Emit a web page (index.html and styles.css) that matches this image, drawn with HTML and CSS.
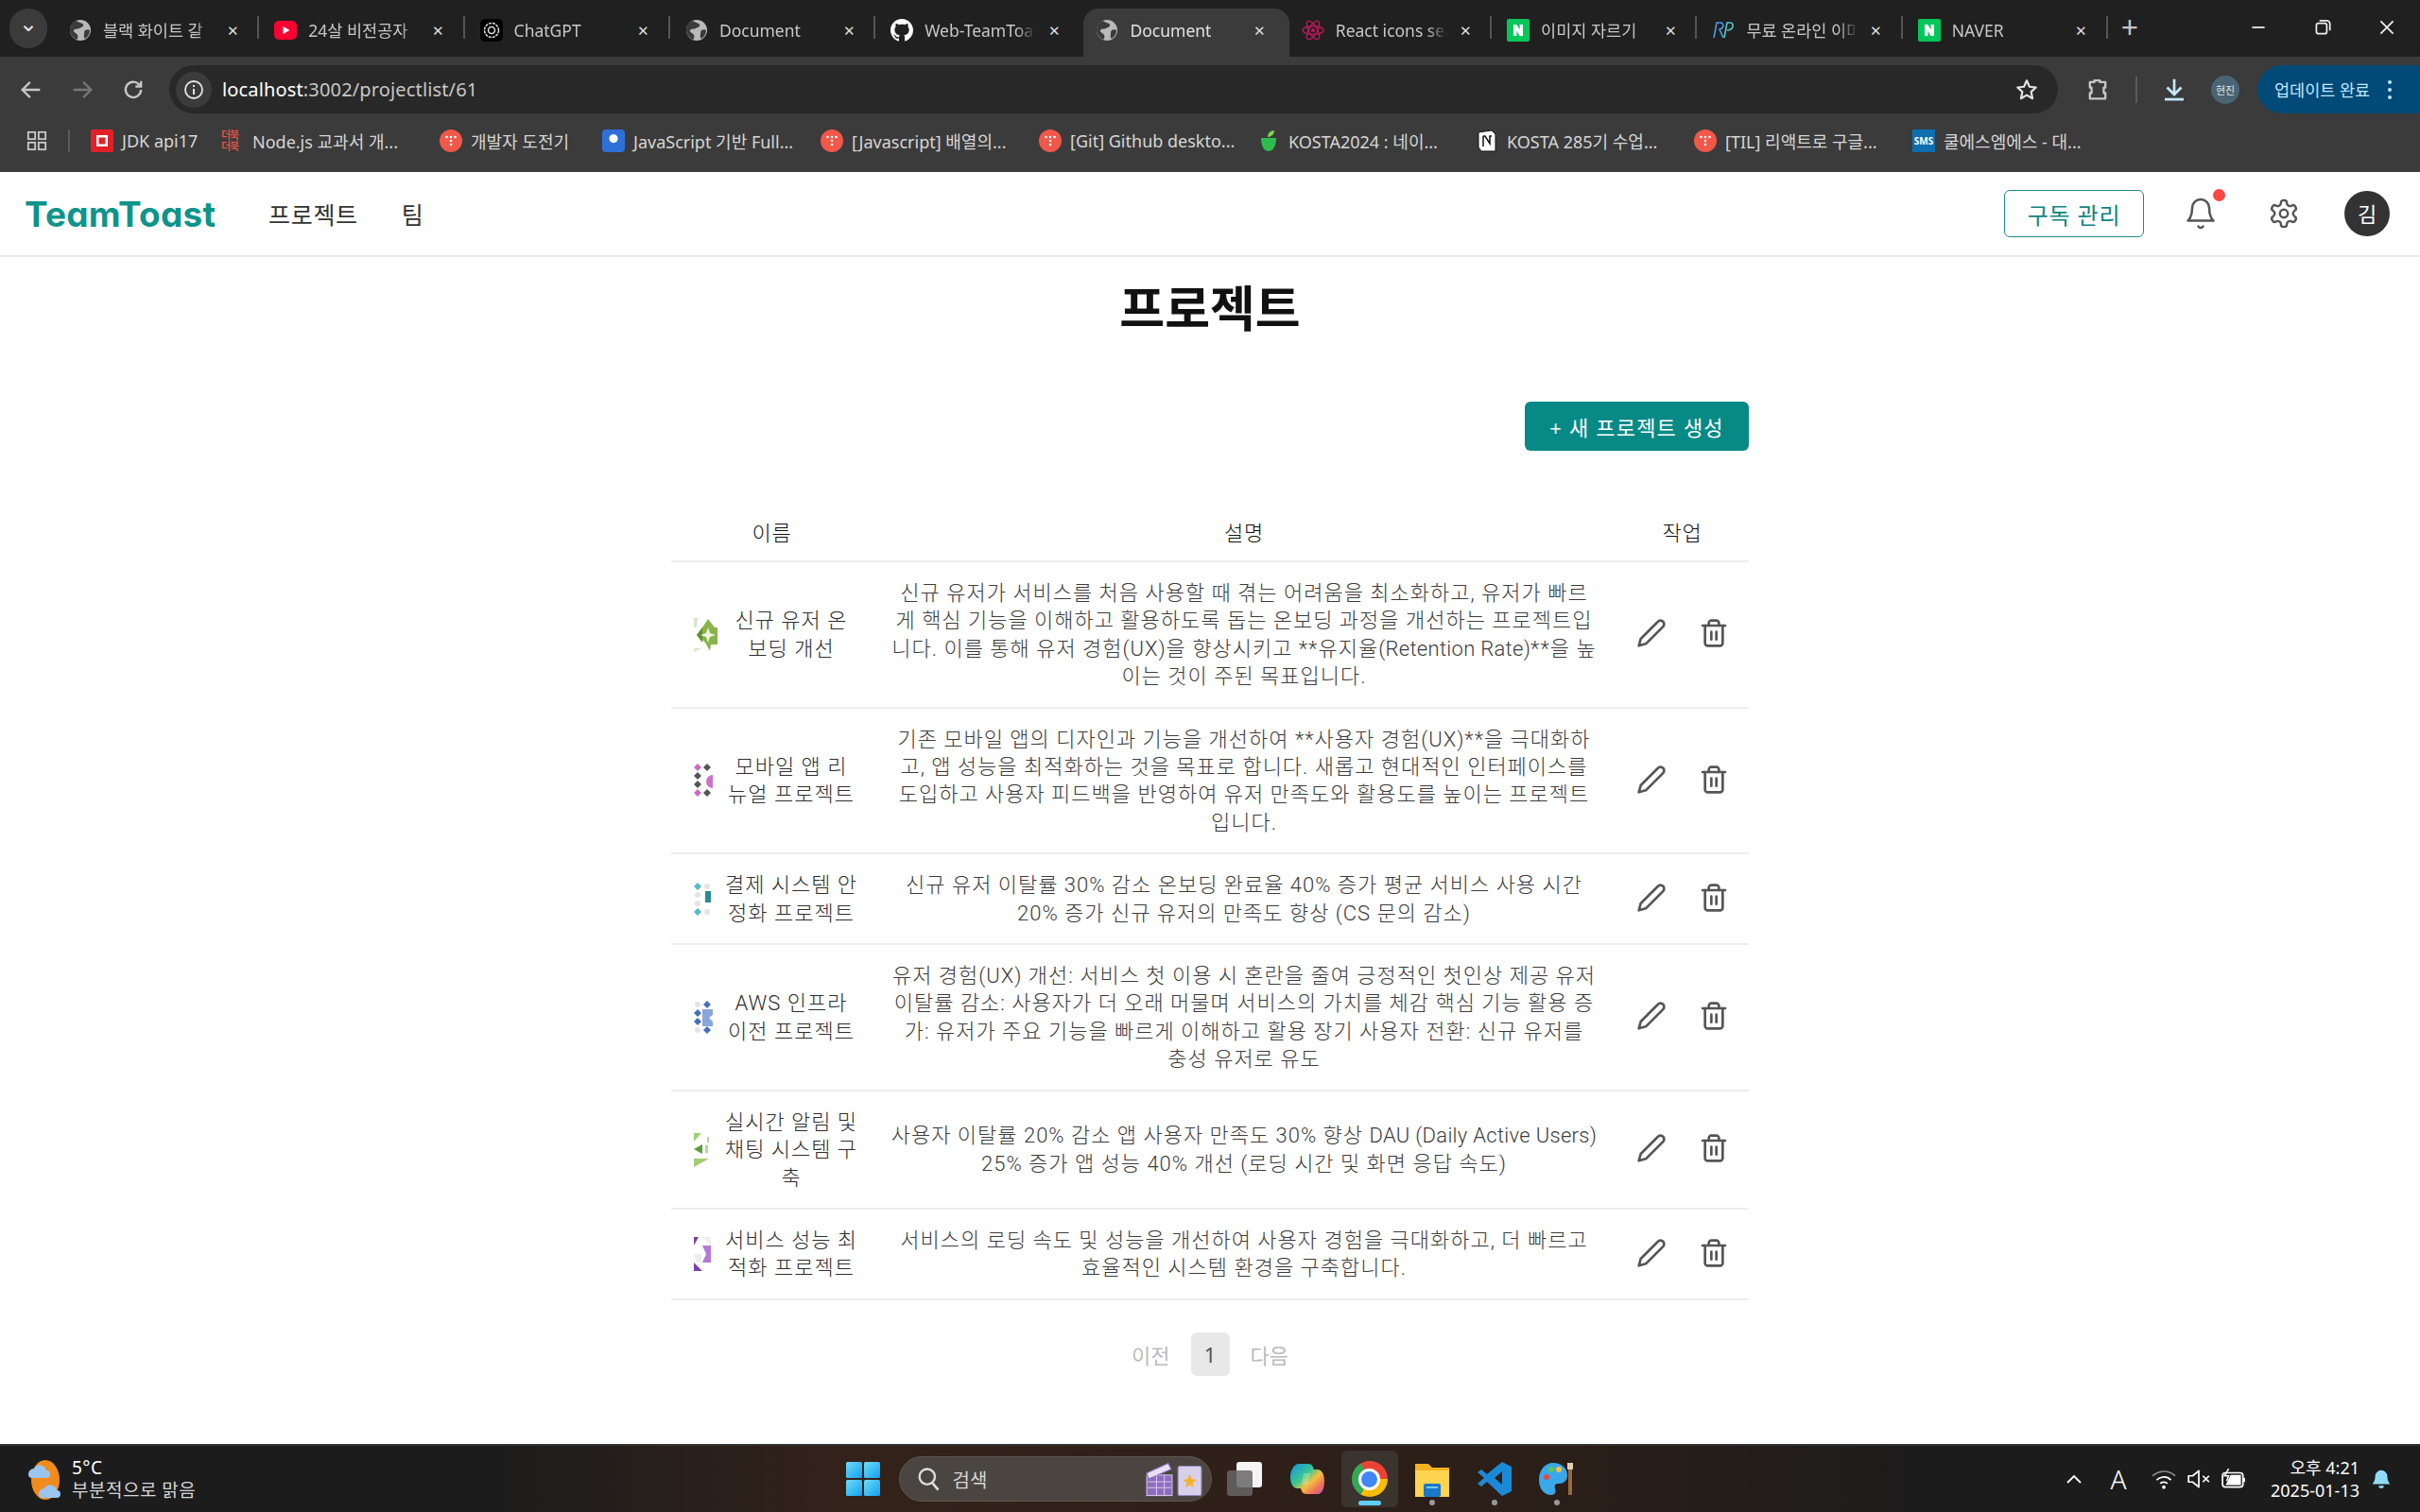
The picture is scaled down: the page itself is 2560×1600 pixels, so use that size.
FILE: index.html
```html
<!DOCTYPE html>
<html lang="ko">
  <head>
    <meta charset="UTF-8" />
    <title>Document</title>
    <link rel="stylesheet" href="styles.css">
  </head>
  <body>
    <svg class="sprites" xmlns="http://www.w3.org/2000/svg">
      <symbol id="globe" viewBox="0 0 24 24">
        <circle cx="12" cy="12" r="11" fill="#b9b9b9"/>
        <path d="M8 2c2 2 6 2 7 4s-2 3-4 4-5 0-6 2 3 3 4 5 0 4-1 5C4 20 1 16 1 12 1 7 4 3 8 2zM17 12c2-1 4-1 5 0 0 4-2 7-5 9-2-2-1-4-1-5s0-3 1-4z" fill="#3b3b3b"/>
      </symbol>
      <symbol id="youtube" viewBox="0 0 24 24">
        <rect x="0" y="2" width="24" height="20" rx="5" fill="#ff0033"/>
        <path d="M9.5 8l7 4-7 4z" fill="#fff"/>
      </symbol>
      <symbol id="chatgpt" viewBox="0 0 24 24">
        <rect width="24" height="24" rx="5" fill="#000"/>
        <circle cx="12" cy="12" r="7.5" fill="none" stroke="#ddd" stroke-width="1.5" stroke-dasharray="3 1"/>
        <circle cx="12" cy="12" r="3.5" fill="none" stroke="#ddd" stroke-width="1.5"/>
      </symbol>
      <symbol id="github" viewBox="0 0 16 16">
        <path fill="#fff" d="M8 0C3.58 0 0 3.58 0 8c0 3.54 2.29 6.53 5.47 7.59.4.07.55-.17.55-.38 0-.19-.01-.82-.01-1.49-2.01.37-2.53-.49-2.69-.94-.09-.23-.48-.94-.82-1.13-.28-.15-.68-.52-.01-.53.63-.01 1.08.58 1.23.82.72 1.21 1.87.87 2.33.66.07-.52.28-.87.51-1.07-1.78-.2-3.64-.89-3.64-3.95 0-.87.31-1.59.82-2.15-.08-.2-.36-1.02.08-2.12 0 0 .67-.21 2.2.82.64-.18 1.32-.27 2-.27.68 0 1.36.09 2 .27 1.53-1.04 2.2-.82 2.2-.82.44 1.1.16 1.92.08 2.12.51.56.82 1.27.82 2.15 0 3.07-1.87 3.75-3.65 3.95.29.25.54.73.54 1.48 0 1.07-.01 1.93-.01 2.2 0 .21.15.46.55.38A8.013 8.013 0 0016 8c0-4.42-3.58-8-8-8z"/>
      </symbol>
      <symbol id="react" viewBox="0 0 24 24">
        <g fill="none" stroke="#c2185b" stroke-width="1.3">
          <ellipse cx="12" cy="12" rx="11" ry="4.4"/>
          <ellipse cx="12" cy="12" rx="11" ry="4.4" transform="rotate(60 12 12)"/>
          <ellipse cx="12" cy="12" rx="11" ry="4.4" transform="rotate(120 12 12)"/>
        </g>
        <circle cx="12" cy="12" r="2" fill="#c2185b"/>
      </symbol>
      <symbol id="naver" viewBox="0 0 24 24">
        <rect width="24" height="24" rx="2" fill="#03c75a"/>
        <path d="M7 6h3.4l3.2 5.2V6H17v12h-3.4l-3.2-5.2V18H7z" fill="#fff"/>
      </symbol>
      <symbol id="rp" viewBox="0 0 24 24">
        <path d="M2 20L5 4h4c4 0 4 6-1 7l4 9" fill="none" stroke="#4b9be8" stroke-width="1.6"/>
        <path d="M13 20l3-16h3c5 0 4 8-3 8" fill="none" stroke="#5ac8c8" stroke-width="1.6"/>
      </symbol>
      <symbol id="tistory" viewBox="0 0 24 24">
        <circle cx="12" cy="12" r="12" fill="#f0584a"/>
        <g fill="#fff"><circle cx="7.5" cy="8" r="1.3"/><circle cx="12" cy="8" r="1.3"/><circle cx="16.5" cy="8" r="1.3"/><circle cx="12" cy="12" r="1.3"/><circle cx="12" cy="16" r="1.3"/></g>
      </symbol>
      <symbol id="pencil" viewBox="0 0 24 24">
        <path d="M17 3a2.85 2.83 0 1 1 4 4L7.5 20.5 2 22l1.5-5.5Z" fill="none" stroke="#555" stroke-width="2" stroke-linecap="round" stroke-linejoin="round"/>
      </symbol>
      <symbol id="trash" viewBox="0 0 24 24">
        <g fill="none" stroke="#555" stroke-width="2" stroke-linecap="round" stroke-linejoin="round">
          <path d="M3 6h18"/><path d="M19 6v14c0 1-1 2-2 2H7c-1 0-2-1-2-2V6"/><path d="M8 6V4c0-1 1-2 2-2h4c1 0 2 1 2 2v2"/>
          <path d="M10 11v6"/><path d="M14 11v6"/>
        </g>
      </symbol>
    </svg>

    <!-- 브라우저 탭 -->
    <div class="tabstrip">
      <div class="tab-search">⌄</div>
      <div class="tab"><svg class="favicon"><use href="#globe"/></svg><span class="tab-title">블랙 화이트 갈</span><span class="tab-close">✕</span></div>
      <div class="tab"><svg class="favicon"><use href="#youtube"/></svg><span class="tab-title">24살 비전공자</span><span class="tab-close">✕</span></div>
      <div class="tab"><svg class="favicon"><use href="#chatgpt"/></svg><span class="tab-title">ChatGPT</span><span class="tab-close">✕</span></div>
      <div class="tab"><svg class="favicon"><use href="#globe"/></svg><span class="tab-title">Document</span><span class="tab-close">✕</span></div>
      <div class="tab no-sep"><svg class="favicon"><use href="#github"/></svg><span class="tab-title">Web-TeamToast</span><span class="tab-close">✕</span></div>
      <div class="tab active no-sep"><svg class="favicon"><use href="#globe"/></svg><span class="tab-title">Document</span><span class="tab-close">✕</span></div>
      <div class="tab"><svg class="favicon"><use href="#react"/></svg><span class="tab-title">React icons search</span><span class="tab-close">✕</span></div>
      <div class="tab"><svg class="favicon"><use href="#naver"/></svg><span class="tab-title">이미지 자르기</span><span class="tab-close">✕</span></div>
      <div class="tab"><svg class="favicon"><use href="#rp"/></svg><span class="tab-title">무료 온라인 이미지</span><span class="tab-close">✕</span></div>
      <div class="tab"><svg class="favicon"><use href="#naver"/></svg><span class="tab-title">NAVER</span><span class="tab-close">✕</span></div>
      <div class="tab-new">+</div>
      <div class="window-controls">
        <svg class="win-btn" viewBox="0 0 20 20"><path d="M4 10h12" stroke="#eee" stroke-width="1.6"/></svg>
        <svg class="win-btn" viewBox="0 0 20 20"><rect x="4" y="6" width="10" height="10" rx="2" fill="none" stroke="#eee" stroke-width="1.6"/><path d="M7 3.5h7a3 3 0 0 1 3 3V13" fill="none" stroke="#eee" stroke-width="1.6"/></svg>
        <svg class="win-btn" viewBox="0 0 20 20"><path d="M4 4l12 12M16 4L4 16" stroke="#eee" stroke-width="1.6"/></svg>
      </div>
    </div>

    <!-- 주소창 -->
    <div class="toolbar">
      <svg class="tool-icon" viewBox="0 0 24 24"><path d="M20 12H5M11 5l-7 7 7 7" fill="none" stroke="#c7c7c7" stroke-width="2"/></svg>
      <svg class="tool-icon" viewBox="0 0 24 24"><path d="M4 12h15M13 5l7 7-7 7" fill="none" stroke="#777" stroke-width="2"/></svg>
      <svg class="tool-icon" viewBox="0 0 24 24"><path d="M19 12a7 7 0 1 1-2-5l2 2M19 4v5h-5" fill="none" stroke="#c7c7c7" stroke-width="2"/></svg>
      <div class="omnibox">
        <span class="site-info"><svg viewBox="0 0 24 24"><circle cx="12" cy="12" r="9" fill="none" stroke="#e3e3e3" stroke-width="1.8"/><path d="M12 11v6M12 7v2" stroke="#e3e3e3" stroke-width="2"/></svg></span>
        <span class="url"><b>localhost</b>:3002/projectlist/61</span>
        <svg class="star" viewBox="0 0 24 24"><path d="M12 3l2.7 6 6.3.7-4.700 4.300 1.300 6.500-5.600-3.300-5.600 3.300 1.300-6.500L3 9.700 9.300 9z" fill="none" stroke="#e3e3e3" stroke-width="2" stroke-linejoin="round"/></svg>
      </div>
      <svg class="ext-icon" viewBox="0 0 24 24"><path d="M9 5V3.500h5V5h5v5h-1.500v5H19v5H5v-5h1.500v-5H5V5z" fill="none" stroke="#c7c7c7" stroke-width="2" stroke-linejoin="round"/></svg>
      <span class="tool-sep"></span>
      <svg class="dl-icon" viewBox="0 0 24 24"><path d="M12 3v12M6 10l6 6 6-6M4 20h16" fill="none" stroke="#c2e7ff" stroke-width="2.200"/></svg>
      <span class="profile">현진</span>
      <div class="update-pill">업데이트 완료<span class="dots"><i></i><i></i><i></i></span></div>
    </div>

    <!-- 북마크 -->
    <div class="bookmarks">
      <svg class="apps" viewBox="0 0 24 24"><g fill="none" stroke="#c7c7c7" stroke-width="2"><rect x="2" y="2" width="8" height="8"/><rect x="14" y="2" width="8" height="8"/><rect x="2" y="14" width="8" height="8"/><rect x="14" y="14" width="8" height="8"/></g></svg>
      <span class="bm-sep"></span>
      <div class="bm bm-a"><span class="bm-oracle"></span>JDK api17</div>
      <div class="bm"><span class="bm-node">더북<br>더북</span>Node.js 교과서 개...</div>
      <div class="bm bm-b"><svg class="favicon"><use href="#tistory"/></svg>개발자 도전기</div>
      <div class="bm"><span class="bm-js"></span>JavaScript 기반 Full...</div>
      <div class="bm"><svg class="favicon"><use href="#tistory"/></svg>[Javascript] 배열의...</div>
      <div class="bm"><svg class="favicon"><use href="#tistory"/></svg>[Git] Github deskto...</div>
      <div class="bm"><svg class="favicon" viewBox="0 0 24 24"><path d="M4 9h16c0 8-3 14-8 14S4 17 4 9z" fill="#2dbd4e"/><path d="M11 8c0-4 3-7 7-7 0 4-3 7-7 7z" fill="#7bd84f"/></svg>KOSTA2024 : 네이...</div>
      <div class="bm"><svg class="favicon" viewBox="0 0 24 24"><path d="M3 3l14-2 4 4v18H6l-3-4z" fill="#fff" stroke="#111"/><path d="M8 7h2l5 8V7h2M8 7v11" fill="none" stroke="#111" stroke-width="1.500"/></svg>KOSTA 285기 수업...</div>
      <div class="bm"><svg class="favicon"><use href="#tistory"/></svg>[TIL] 리액트로 구글...</div>
      <div class="bm"><span class="bm-sms">SMS</span>쿨에스엠에스 - 대...</div>
    </div>

    <header class="app-header">
      <div class="logo">TeamToast</div>
      <nav class="app-nav">
        <a>프로젝트</a>
        <a>팀</a>
      </nav>
      <div class="header-right">
        <button class="subscribe-btn">구독 관리</button>
        <div class="bell">
          <svg viewBox="0 0 24 24"><g fill="none" stroke="#555" stroke-width="1.700" stroke-linecap="round" stroke-linejoin="round"><path d="M6 8a6 6 0 0 1 12 0c0 7 3 9 3 9H3s3-2 3-9"/><path d="M10.300 21a1.940 1.940 0 0 0 3.400 0"/></g></svg>
          <span class="bell-dot"></span>
        </div>
        <svg class="gear" viewBox="0 0 24 24"><g fill="none" stroke="#555" stroke-width="1.700" stroke-linecap="round" stroke-linejoin="round"><path d="M12.220 2h-.44a2 2 0 0 0-2 2v.18a2 2 0 0 1-1 1.730l-.43.25a2 2 0 0 1-2 0l-.15-.08a2 2 0 0 0-2.730.73l-.22.38a2 2 0 0 0 .73 2.730l.15.1a2 2 0 0 1 1 1.720v.51a2 2 0 0 1-1 1.740l-.15.09a2 2 0 0 0-.73 2.730l.22.38a2 2 0 0 0 2.730.73l.15-.08a2 2 0 0 1 2 0l.43.25a2 2 0 0 1 1 1.730V20a2 2 0 0 0 2 2h.44a2 2 0 0 0 2-2v-.18a2 2 0 0 1 1-1.730l.43-.25a2 2 0 0 1 2 0l.15.08a2 2 0 0 0 2.730-.73l.22-.39a2 2 0 0 0-.73-2.730l-.15-.08a2 2 0 0 1-1-1.740v-.5a2 2 0 0 1 1-1.740l.15-.09a2 2 0 0 0 .73-2.730l-.22-.38a2 2 0 0 0-2.730-.73l-.15.08a2 2 0 0 1-2 0l-.43-.25a2 2 0 0 1-1-1.730V4a2 2 0 0 0-2-2z"/><circle cx="12" cy="12" r="3"/></g></svg>
        <div class="avatar">김</div>
      </div>
    </header>

    <main class="content">
      <h1 class="page-title">프로젝트</h1>
      <div class="actions-bar">
        <button class="create-btn">+ 새 프로젝트 생성</button>
      </div>
      <table class="project-table">
        <thead>
          <tr>
            <th class="col-name">이름</th>
            <th class="col-desc">설명</th>
            <th class="col-act">작업</th>
          </tr>
        </thead>
        <tbody>
          <tr>
            <td>
              <div class="name-cell">
                <svg class="identicon" viewBox="0 0 26 36"><path d="M0 0h4l-1 10H0zM0 36v-4h8z" fill="#d9e6c8"/><path d="M3 18l6-8 6-9 7 9h3v18h-7l-1 7-5-9z" fill="#8ab34c"/><path d="M3 18l6-8v16z" fill="#5f8f35"/><path d="M15 10l2 6 6 2-6 2-2 6-2-6-6-2 6-2z" fill="#eef5e2"/></svg>
                <span class="name-text">신규 유저 온<br>보딩 개선</span>
              </div>
            </td>
            <td class="desc">신규 유저가 서비스를 처음 사용할 때 겪는 어려움을 최소화하고, 유저가 빠르<br>게 핵심 기능을 이해하고 활용하도록 돕는 온보딩 과정을 개선하는 프로젝트입<br>니다. 이를 통해 유저 경험(UX)을 향상시키고 **유지율<span class="en">(Retention Rate)</span>**을 높<br>이는 것이 주된 목표입니다.</td>
            <td class="row-actions"><button><svg><use href="#pencil"/></svg></button><button><svg><use href="#trash"/></svg></button></td>
          </tr>
          <tr>
            <td>
              <div class="name-cell">
                <svg class="identicon" viewBox="0 0 26 36"><path d="M4 0l4 4-4 4-4-4zM4 27l4 4-4 4-4-4z" fill="#c76fc7"/><path d="M14 0l4 4-4 4-4-4zM14 27l4 4-4 4-4-4zM4 9l4 4-4 4-4-4zM4 18l4 4-4 4-4-4z" fill="#555"/><path d="M20 12v14a7 7 0 0 1 0-14z" fill="#cb72cb"/></svg>
                <span class="name-text">모바일 앱 리<br>뉴얼 프로젝트</span>
              </div>
            </td>
            <td class="desc">기존 모바일 앱의 디자인과 기능을 개선하여 **사용자 경험(UX)**을 극대화하<br>고, 앱 성능을 최적화하는 것을 목표로 합니다. 새롭고 현대적인 인터페이스를<br>도입하고 사용자 피드백을 반영하여 유저 만족도와 활용도를 높이는 프로젝트<br>입니다.</td>
            <td class="row-actions"><button><svg><use href="#pencil"/></svg></button><button><svg><use href="#trash"/></svg></button></td>
          </tr>
          <tr>
            <td>
              <div class="name-cell">
                <svg class="identicon" viewBox="0 0 26 36"><path d="M4 0l4 4-4 4-4-4zM4 27l4 4-4 4-4-4z" fill="#56b8c8"/><g fill="#e4e4e4"><circle cx="14" cy="4" r="3"/><circle cx="4" cy="13" r="3"/><circle cx="4" cy="22" r="3"/><circle cx="14" cy="31" r="3"/></g><path d="M12 9h6v12h-6z" fill="#2b8a94"/></svg>
                <span class="name-text">결제 시스템 안<br>정화 프로젝트</span>
              </div>
            </td>
            <td class="desc">신규 유저 이탈률 30% 감소 온보딩 완료율 40% 증가 평균 서비스 사용 시간<br>20% 증가 신규 유저의 만족도 향상 (CS 문의 감소)</td>
            <td class="row-actions"><button><svg><use href="#pencil"/></svg></button><button><svg><use href="#trash"/></svg></button></td>
          </tr>
          <tr>
            <td>
              <div class="name-cell">
                <svg class="identicon" viewBox="0 0 26 36"><g fill="#e4e4e4"><circle cx="4" cy="4" r="3"/><circle cx="4" cy="31" r="3"/></g><path d="M14 0l4 4-4 4-4-4zM14 27l4 4-4 4-4-4zM4 9l4 4-4 4-4-4zM4 18l4 4-4 4-4-4z" fill="#4470b8"/><path d="M9 9h11v6l-4 3 4 4v5H9z" fill="#8aa6d8"/></svg>
                <span class="name-text">AWS 인프라<br>이전 프로젝트</span>
              </div>
            </td>
            <td class="desc">유저 경험(UX) 개선: 서비스 첫 이용 시 혼란을 줄여 긍정적인 첫인상 제공 유저<br>이탈률 감소: 사용자가 더 오래 머물며 서비스의 가치를 체감 핵심 기능 활용 증<br>가: 유저가 주요 기능을 빠르게 이해하고 활용 장기 사용자 전환: 신규 유저를<br>충성 유저로 유도</td>
            <td class="row-actions"><button><svg><use href="#pencil"/></svg></button><button><svg><use href="#trash"/></svg></button></td>
          </tr>
          <tr>
            <td>
              <div class="name-cell">
                <svg class="identicon" viewBox="0 0 26 36"><path d="M0 0h8l-8 9zM0 27h16L0 36z" fill="#a4cc74"/><path d="M9 12v10L0 17z" fill="#5f9a3a"/><path d="M14 4h2v6h-2zM12 13h3v8h-3z" fill="#b8d898"/></svg>
                <span class="name-text">실시간 알림 및<br>채팅 시스템 구<br>축</span>
              </div>
            </td>
            <td class="desc">사용자 이탈률 20% 감소 앱 사용자 만족도 30% 향상 <span class="en">DAU (Daily Active Users)</span><br>25% 증가 앱 성능 40% 개선 (로딩 시간 및 화면 응답 속도)</td>
            <td class="row-actions"><button><svg><use href="#pencil"/></svg></button><button><svg><use href="#trash"/></svg></button></td>
          </tr>
          <tr>
            <td>
              <div class="name-cell">
                <svg class="identicon" viewBox="0 0 26 36"><path d="M0 0h5L0 9zM0 27l9 9H0z" fill="#7a3fa8"/><path d="M9 0h9v9z M0 18h8v9H3z" fill="#eeeeee"/><path d="M9 9h9v18H9l4-9z" fill="#b47ad8"/></svg>
                <span class="name-text">서비스 성능 최<br>적화 프로젝트</span>
              </div>
            </td>
            <td class="desc">서비스의 로딩 속도 및 성능을 개선하여 사용자 경험을 극대화하고, 더 빠르고<br>효율적인 시스템 환경을 구축합니다.</td>
            <td class="row-actions"><button><svg><use href="#pencil"/></svg></button><button><svg><use href="#trash"/></svg></button></td>
          </tr>
        </tbody>
      </table>
      <div class="pagination">
        <span class="page-link">이전</span>
        <span class="page-current">1</span>
        <span class="page-link">다음</span>
      </div>
    </main>

    <!-- 작업 표시줄 -->
    <footer class="taskbar">
      <div class="task-left">
        <svg class="weather" viewBox="0 0 36 48">
          <ellipse cx="20" cy="25" rx="15" ry="21" fill="#f08c1e"/>
          <path d="M2 19a6 6 0 0 1 6-6 7 7 0 0 1 13 2 4 4 0 0 1 0 8H6a4 4 0 0 1-4-4z" fill="#9cc4f0"/>
          <path d="M13 40a6 6 0 0 1 6-6 7 7 0 0 1 13 2 4 4 0 0 1 0 8H17a4 4 0 0 1-4-4z" fill="#9cc4f0"/>
        </svg>
        <div class="weather-text"><span class="temp">5°C</span><span class="cond">부분적으로 맑음</span></div>
      </div>
      <div class="task-center">
        <svg class="task-win" viewBox="0 0 36 36">
          <defs><linearGradient id="wing" x1="0" y1="0" x2="1" y2="1"><stop offset="0" stop-color="#6fdcf5"/><stop offset="1" stop-color="#12a0f0"/></linearGradient></defs>
          <g fill="url(#wing)"><rect width="17" height="17" rx="1.500"/><rect x="19" width="17" height="17" rx="1.500"/><rect y="19" width="17" height="17" rx="1.500"/><rect x="19" y="19" width="17" height="17" rx="1.500"/></g>
        </svg>
        <div class="task-search">
          <svg viewBox="0 0 24 24"><circle cx="11" cy="10" r="7" fill="none" stroke="#ddd" stroke-width="2"/><path d="M16 16l5 6" stroke="#ddd" stroke-width="2.200"/></svg>
          <span>검색</span>
          <svg class="deco" viewBox="0 0 60 36">
            <rect x="2" y="14" width="26" height="21" fill="#8d6cc0" stroke="#d4c8ea"/><path d="M2 12l22-10 3 6-23 10z" fill="#e6e0f4" stroke="#8d6cc0"/><path d="M3 21h24M3 27h24M12 14v21M20 14v21" stroke="#d4c8ea"/>
            <rect x="34" y="5" width="24" height="30" rx="2" fill="#d8d0ea" stroke="#9988bb"/><path d="M46 13l2 5 5 1-4 3 1 5-4-3-4 3 1-5-4-3 5-1z" fill="#f5b030"/>
          </svg>
        </div>
        <div class="task-item">
          <svg viewBox="0 0 38 38"><rect x="10" y="1" width="27" height="27" rx="3" fill="#f4f4f4"/><rect x="0" y="10" width="27" height="27" rx="3" fill="#666" fill-opacity=".85"/></svg>
        </div>
        <div class="task-item">
          <svg viewBox="0 0 38 38">
            <defs><linearGradient id="cop" x1="0" y1="0" x2="1" y2="1"><stop offset="0" stop-color="#1a8fe8"/><stop offset=".4" stop-color="#38c890"/><stop offset=".6" stop-color="#f5c040"/><stop offset=".8" stop-color="#f07058"/><stop offset="1" stop-color="#c050d8"/></linearGradient></defs>
            <path d="M10 3h10c4 0 5 3 6 6l4 0c4 0 7 5 7 12 0 7-2 14-7 14H18c-4 0-5-3-6-6H8c-4 0-7-5-7-12C1 10 5 3 10 3z" fill="url(#cop)"/><path d="M15 13h7l-3 12h-6z" fill="#fff" fill-opacity=".25"/>
          </svg>
        </div>
        <div class="task-item task-active">
          <span class="chrome-logo"><span></span></span>
          <i class="task-mark"></i>
        </div>
        <div class="task-item">
          <svg viewBox="0 0 38 38"><path d="M1 3h14l4 4h18v31H1z" fill="#f2b322"/><path d="M1 10h36v28H1z" fill="#fdd44f"/><rect x="10" y="24" width="18" height="14" rx="2" fill="#1a78c8"/><rect x="13" y="27" width="12" height="2" fill="#7cc4f0"/></svg>
          <i class="task-dot"></i>
        </div>
        <div class="task-item">
          <svg viewBox="0 0 38 38"><path d="M27 1l10 5v26l-10 5L11 22l-6 5-4-3 7-6-7-6 4-3 6 5zm0 10l-8 7 8 7z" fill="#1a8ad8" fill-rule="evenodd"/></svg>
          <i class="task-dot"></i>
        </div>
        <div class="task-item">
          <svg viewBox="0 0 38 38"><path d="M15 2C6 2 0 10 0 20s6 16 13 16c5 0 5-4 4-7s0-5 4-5c5 0 9-3 9-9C30 8 24 2 15 2z" fill="#3aa8e8"/><circle cx="8" cy="17" r="3" fill="#e84848"/><circle cx="13" cy="9" r="3" fill="#58c858"/><circle cx="21" cy="9" r="3" fill="#f5c040"/><rect x="31" y="8" width="4" height="28" fill="#9a6a3a"/><path d="M30 2h6v7h-6z" fill="#e0d0b0"/></svg>
          <i class="task-dot"></i>
        </div>
      </div>
      <div class="task-right">
        <svg class="tray-chev" viewBox="0 0 20 20"><path d="M3 14l7-7 7 7" fill="none" stroke="#fff" stroke-width="1.800"/></svg>
        <span class="tray-ime">A</span>
        <svg class="tray-icon" viewBox="0 0 24 20"><path d="M1 7a16 16 0 0 1 22 0" fill="none" stroke="#888" stroke-width="1.600"/><path d="M5 11a10 10 0 0 1 14 0M8.500 14.500a5 5 0 0 1 7 0" fill="none" stroke="#fff" stroke-width="1.600"/><circle cx="12" cy="18" r="1.700" fill="#fff"/></svg>
        <svg class="tray-icon" viewBox="0 0 24 20"><path d="M2 7h4l6-5v16l-6-5H2z" fill="none" stroke="#fff" stroke-width="1.600" stroke-linejoin="round"/><path d="M16 7l6 6M22 7l-6 6" stroke="#fff" stroke-width="1.600"/></svg>
        <svg class="tray-icon" viewBox="0 0 24 20"><rect x="1" y="4" width="20" height="14" rx="3" fill="none" stroke="#fff" stroke-width="1.600"/><path d="M4 16l5-10h10v10z" fill="#fff"/><path d="M22 9v4" stroke="#fff" stroke-width="2"/><path d="M7 0L3 7h4l-2 5" fill="none" stroke="#fff" stroke-width="1.400"/></svg>
        <div class="clock"><span>오후 4:21</span><span>2025-01-13</span></div>
        <svg class="tray-bell" viewBox="0 0 24 24"><path d="M12 2a7 7 0 0 1 7 7c0 6 3 8 3 9H2c0-1 3-3 3-9a7 7 0 0 1 7-7z" fill="#8fdcf8"/><path d="M9 20h6a3 3 0 0 1-6 0z" fill="#8fdcf8"/></svg>
      </div>
    </footer>
  </body>
</html>
```

FILE: styles.css
```css
* {
  box-sizing: border-box;
}
html,
body {
  height: 100%;
}
body {
  display: flex;
  flex-direction: column;
  height: 100vh;
  margin: 0;
  overflow: hidden;
  font-family: "Noto Sans", "Noto Sans CJK KR", sans-serif;
  background-color: #fff;
  color: #333;
}
.sprites {
  display: none;
}

/* 탭 */
.tabstrip {
  display: flex;
  align-items: flex-end;
  flex: none;
  height: 60px;
  padding-left: 10px;
  background-color: #202020;
}
.tab-search {
  flex: none;
  width: 40px;
  height: 42px;
  margin: 0 10px 9px 0;
  border-radius: 20px;
  background-color: #3b3b3b;
  color: #e3e3e3;
  font-size: 24px;
  line-height: 30px;
  text-align: center;
}
.tab {
  display: flex;
  align-items: center;
  flex: none;
  width: 217.3px;
  height: 51px;
  padding: 0 20px 6px 13px;
  color: #c7c7c7;
  font-size: 17.5px;
  position: relative;
}
.tab::after {
  content: "";
  position: absolute;
  right: 3px;
  top: 8px;
  width: 2px;
  height: 24px;
  background-color: #555;
}
.tab.no-sep::after,
.tab.active::after {
  display: none;
}
.tab.active {
  border-radius: 16px 16px 0 0;
  background-color: #3b3b3b;
  color: #e3e3e3;
}
.favicon {
  flex: none;
  width: 24px;
  height: 24px;
}
.tab-title {
  flex: 1;
  min-width: 0;
  margin-left: 12px;
  overflow: hidden;
  white-space: nowrap;
  -webkit-mask-image: linear-gradient(to right, #000 82%, transparent);
  mask-image: linear-gradient(to right, #000 82%, transparent);
}
.tab-close {
  flex: none;
  width: 22px;
  margin-left: 8px;
  font-size: 15px;
  color: #ddd;
  text-align: center;
}
.tab-new {
  flex: none;
  width: 36px;
  margin: 0 0 13px 2px;
  color: #c7c7c7;
  font-size: 32px;
  line-height: 36px;
  text-align: center;
}
.window-controls {
  display: flex;
  gap: 46px;
  margin: 0 0 20px auto;
  padding-right: 24px;
}
.win-btn {
  width: 22px;
  height: 22px;
}

/* 주소창 */
.toolbar {
  display: flex;
  align-items: center;
  flex: none;
  height: 60px;
  padding: 9px 0 0 19px;
  background-color: #3b3b3b;
}
.tool-icon {
  flex: none;
  width: 28px;
  height: 28px;
  margin-right: 26px;
}
.omnibox {
  display: flex;
  align-items: center;
  flex: none;
  width: 1998px;
  height: 51px;
  margin-left: -2px;
  padding: 0 20px 0 7px;
  border-radius: 26px;
  background-color: #282828;
}
.site-info {
  display: flex;
  align-items: center;
  justify-content: center;
  flex: none;
  width: 38px;
  height: 38px;
  border-radius: 50%;
  background-color: #3b3b3b;
}
.site-info svg {
  width: 24px;
  height: 24px;
}
.url {
  flex: 1;
  margin-left: 11px;
  color: #c7c7c7;
  font-size: 20px;
  letter-spacing: 0.15px;
}
.url b {
  color: #fff;
  font-weight: 400;
}
.star {
  flex: none;
  width: 26px;
  height: 26px;
}
.ext-icon {
  flex: none;
  width: 28px;
  height: 28px;
  margin-left: 28px;
}
.tool-sep {
  flex: none;
  width: 2px;
  height: 28px;
  margin-left: 26px;
  background-color: #5a5a5a;
}
.dl-icon {
  flex: none;
  width: 30px;
  height: 30px;
  margin-left: 24px;
}
.profile {
  display: flex;
  align-items: center;
  justify-content: center;
  flex: none;
  width: 30px;
  height: 30px;
  margin-left: 24px;
  border-radius: 50%;
  background-color: #4a6474;
  color: #e3e3e3;
  font-size: 11px;
}
.update-pill {
  display: flex;
  align-items: center;
  justify-content: space-between;
  flex: none;
  width: 173px;
  height: 51px;
  margin-left: 19px;
  padding: 0 31px 0 18px;
  border-radius: 26px 0 0 26px;
  background-color: #004a77;
  color: #c2e7ff;
  font-size: 17.5px;
  white-space: nowrap;
}
.dots {
  display: flex;
  flex-direction: column;
  gap: 4px;
}
.dots i {
  display: block;
  width: 4px;
  height: 4px;
  border-radius: 50%;
  background-color: #c2e7ff;
}

/* 북마크 */
.bookmarks {
  display: flex;
  align-items: center;
  flex: none;
  height: 62px;
  padding: 0 0 4px 28px;
  background-color: #3b3b3b;
  color: #d6d6d6;
  font-size: 18px;
}
.apps {
  flex: none;
  width: 22px;
  height: 22px;
}
.bm-sep {
  flex: none;
  width: 2px;
  height: 24px;
  margin: 0 22px;
  background-color: #5a5a5a;
}
.bm {
  display: flex;
  align-items: center;
  flex: none;
  width: 231px;
  gap: 9px;
  white-space: nowrap;
}
.bm-a {
  width: 138px;
}
.bm-b {
  width: 172px;
}
.bm-oracle {
  flex: none;
  width: 24px;
  height: 24px;
  border: 6px solid #e3202a;
  border-radius: 2px;
  background-color: #e3202a;
  box-shadow: inset 0 0 0 2.5px #fff;
}
.bm-node {
  flex: none;
  width: 24px;
  height: 24px;
  color: #d9534a;
  font-size: 11px;
  font-weight: 700;
  line-height: 12px;
  letter-spacing: -1px;
}
.bm-js {
  flex: none;
  width: 24px;
  height: 24px;
  border-radius: 4px;
  background: radial-gradient(circle at 50% 40%, #fff 0 4px, transparent 5px), #2f6fd8;
}
.bm-sms {
  flex: none;
  width: 24px;
  height: 24px;
  background-color: #0d6fb0;
  color: #fff;
  font-size: 10px;
  font-weight: 700;
  line-height: 24px;
  text-align: center;
}

/* 앱 헤더 */
.app-header {
  display: flex;
  align-items: center;
  flex: none;
  height: 90px;
  padding: 0 32px 0 26px;
  border-bottom: 2px solid #e8e8e8;
  background-color: #fff;
}
.logo {
  color: #0e948b;
  font-family: Inter, Lato, sans-serif;
  font-size: 37px;
  font-weight: 700;
  font-feature-settings: "cv11";
  letter-spacing: 0.2px;
  width: 200px;
  white-space: nowrap;
}
.app-nav {
  display: flex;
  gap: 46px;
  margin-left: 58px;
}
.app-nav a {
  color: #333;
  font-size: 25px;
  letter-spacing: 0.7px;
}
.header-right {
  display: flex;
  align-items: center;
  margin-left: auto;
}
.subscribe-btn {
  width: 148px;
  height: 50px;
  border: 1.5px solid #1b8a88;
  border-radius: 6px;
  background-color: #fff;
  color: #0e8480;
  font-family: inherit;
  font-size: 24px;
  letter-spacing: 0.8px;
}
.bell {
  position: relative;
  width: 36px;
  height: 36px;
  margin-left: 42px;
}
.bell svg {
  display: block;
  width: 36px;
  height: 36px;
}
.bell-dot {
  position: absolute;
  top: -8px;
  right: -8px;
  width: 13px;
  height: 13px;
  border-radius: 50%;
  background-color: #f44;
}
.gear {
  width: 34px;
  height: 34px;
  margin-left: 53px;
}
.avatar {
  width: 48px;
  height: 48px;
  margin-left: 47px;
  border-radius: 50%;
  background-color: #333;
  color: #fff;
  font-size: 22px;
  line-height: 48px;
  text-align: center;
}

/* 본문 */
.content {
  flex: 1;
  width: 1140px;
  margin: 0 auto;
  padding-top: 24px;
  min-height: 0;
}
.page-title {
  margin: 0 0 69px;
  color: #111;
  font-size: 52px;
  font-weight: 700;
  line-height: 60px;
  text-align: center;
}
.actions-bar {
  display: flex;
  justify-content: flex-end;
  margin-bottom: 56px;
}
.create-btn {
  width: 237px;
  height: 52px;
  border: none;
  border-radius: 6px;
  background-color: #078a86;
  color: #fff;
  font-family: inherit;
  font-size: 22px;
  letter-spacing: 1.2px;
}
.project-table {
  width: 100%;
  border-collapse: collapse;
  table-layout: fixed;
  font-family: Roboto, "Noto Sans CJK KR", sans-serif;
}
.project-table th {
  padding: 17px 0 13px;
  border-bottom: 2px solid #eee;
  color: #111;
  font-size: 22px;
  font-weight: 300;
  line-height: 30px;
  letter-spacing: 0.8px;
}
.col-name {
  width: 213px;
}
.col-act {
  width: 141px;
}
.project-table td {
  padding: 18px 0 17px;
  border-bottom: 2px solid #eee;
  font-size: 22px;
  font-weight: 300;
  line-height: 29.4px;
  letter-spacing: 1px;
  text-align: center;
  white-space: nowrap;
}
.name-cell {
  display: flex;
  align-items: center;
  padding-left: 24px;
}
.identicon {
  flex: none;
  width: 26px;
  height: 36px;
}
.name-text {
  flex: none;
  width: 146px;
  margin-left: 4px;
  color: #2e2e2e;
}
.project-table .desc {
  color: #3c3c3c;
}
.desc .en {
  letter-spacing: 0.3px;
}
.row-actions button {
  width: 40px;
  height: 40px;
  margin: -3px 13px 0;
  padding: 0;
  border: none;
  background: none;
  vertical-align: middle;
}
.row-actions svg {
  display: block;
  width: 32px;
  height: 32px;
  margin: 0 auto;
}
.pagination {
  display: flex;
  align-items: center;
  justify-content: center;
  gap: 22px;
  margin-top: 34px;
}
.page-link {
  color: #bbb;
  font-size: 22px;
}
.page-current {
  width: 41px;
  height: 46px;
  border-radius: 6px;
  background-color: #e8e8e8;
  color: #555;
  font-size: 22px;
  line-height: 46px;
  text-align: center;
}

/* 작업 표시줄 */
.taskbar {
  display: grid;
  grid-template-columns: 1fr auto 1fr;
  align-items: center;
  flex: none;
  height: 72px;
  border-top: 2px solid #333;
  background: linear-gradient(to right, #1c1c1c 0, #1c1c1c 20%, #33221a 35%, #2a1e18 65%, #1c1c1c 80%, #1c1c1c 100%);
  color: #fff;
}
.task-left {
  display: flex;
  align-items: center;
  padding-left: 28px;
}
.weather {
  flex: none;
  width: 36px;
  height: 48px;
}
.weather-text {
  display: flex;
  flex-direction: column;
  margin-left: 12px;
  font-size: 19px;
  line-height: 24px;
  letter-spacing: 0.5px;
}
.cond {
  color: #d6d6d6;
}
.task-center {
  display: flex;
  align-items: center;
  padding-left: 17px;
}
.task-win {
  width: 36px;
  height: 36px;
}
.task-search {
  display: flex;
  align-items: center;
  width: 331px;
  height: 48px;
  margin: 0 5px 0 20px;
  padding: 0 8px 0 16px;
  border: 1px solid #5e5650;
  border-radius: 24px;
  background-color: #4a4540;
  color: #d6d6d6;
  font-size: 20px;
}
.task-search svg {
  flex: none;
  width: 28px;
  height: 28px;
}
.task-search span {
  flex: 1;
  margin-left: 12px;
}
.task-search .deco {
  width: 62px;
  height: 38px;
}
.task-item {
  position: relative;
  display: flex;
  align-items: center;
  justify-content: center;
  width: 60px;
  height: 60px;
  margin-right: 6px;
  border-radius: 6px;
}
.task-item svg {
  width: 38px;
  height: 38px;
}
.task-active {
  background-color: #3a332e;
}
.task-mark {
  position: absolute;
  left: 18px;
  bottom: 2px;
  width: 24px;
  height: 5px;
  border-radius: 3px;
  background-color: #60cdff;
}
.task-dot {
  position: absolute;
  left: 27px;
  bottom: 2px;
  width: 6px;
  height: 6px;
  border-radius: 50%;
  background-color: #999;
}
.chrome-logo {
  display: flex;
  align-items: center;
  justify-content: center;
  width: 38px;
  height: 38px;
  border-radius: 50%;
  background: conic-gradient(#ea4335 0 90deg, #fbbc04 90deg 210deg, #34a853 210deg 330deg, #ea4335 330deg);
}
.chrome-logo span {
  width: 17px;
  height: 17px;
  border: 3px solid #fff;
  border-radius: 50%;
  background-color: #4285f4;
  box-sizing: content-box;
}
.task-right {
  display: flex;
  align-items: center;
  justify-content: flex-end;
  padding-right: 30px;
}
.tray-chev {
  width: 20px;
  height: 20px;
}
.tray-ime {
  width: 30px;
  margin-left: 22px;
  font-size: 28px;
  font-weight: 300;
  text-align: center;
}
.tray-icon {
  width: 26px;
  height: 22px;
  margin-left: 11px;
}
.tray-ime + .tray-icon {
  margin-left: 20px;
}
.clock {
  display: flex;
  flex-direction: column;
  align-items: flex-end;
  margin-left: 26px;
  font-size: 18px;
  line-height: 24px;
}
.tray-bell {
  width: 22px;
  height: 26px;
  margin-left: 12px;
}
```
